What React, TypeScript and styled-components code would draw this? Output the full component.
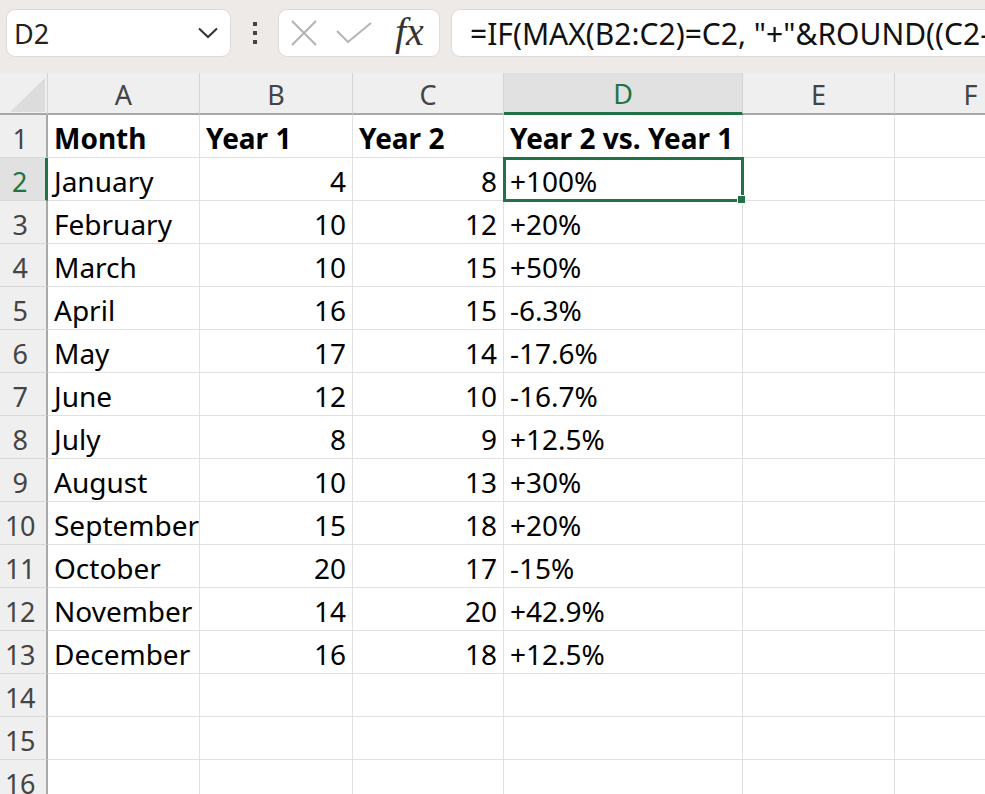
import styled, { createGlobalStyle } from "styled-components";

const GlobalStyle = createGlobalStyle`
  html, body {
    margin: 0;
    padding: 0;
    background: #fff;
    overflow: hidden;
  }
  body {
    font-family: "Noto Sans", "Open Sans", sans-serif;
  }
`;

const GREEN = "#217346";
const GRID = "#e1e1e1";
const HEAD_BG = "#efefef";
const HEAD_SEL = "#e1e1e1";

const Page = styled.div`
  width: 985px;
  height: 794px;
  overflow: hidden;
`;

const Toolbar = styled.div`
  height: 73px;
  background: #eeeae8;
  display: flex;
  align-items: flex-start;
  padding: 9px 0 0 6px;
  box-sizing: border-box;
  white-space: nowrap;
`;

const Box = styled.div<{ $w?: number }>`
  height: 48px;
  box-sizing: border-box;
  background: #fff;
  border: 1px solid #dedad8;
  border-radius: 9px;
  display: flex;
  align-items: center;
  flex: none;
  width: ${(p) => (p.$w ? `${p.$w}px` : "auto")};
  overflow: hidden;
`;

const NameText = styled.span`
  flex: 1;
  padding-left: 7px;
  font-size: 27px;
  color: #222;
`;

const Chevron = styled.svg`
  margin-right: 12px;
`;

const Dots = styled.div`
  width: 47px;
  height: 48px;
  display: flex;
  flex-direction: column;
  align-items: center;
  justify-content: center;
  gap: 5px;
  flex: none;
`;

const Dot = styled.span`
  width: 4px;
  height: 4px;
  background: #444;
`;

const IconSlot = styled.div`
  width: 50px;
  display: flex;
  align-items: center;
  justify-content: center;
`;

const Fx = styled.span`
  font-family: "Liberation Serif", "DejaVu Serif", serif;
  font-style: italic;
  font-size: 40px;
  color: #333;
  margin-left: 16px;
  margin-top: -4px;
`;

const Formula = styled.div`
  margin-left: 11px;
  flex: none;
  width: 600px;
  padding-left: 18px;
  font-size: 30px;
  color: #111;
  border-right: none;
  border-top-right-radius: 0;
  border-bottom-right-radius: 0;
`;

const Sheet = styled.div`
  display: grid;
  grid-template-columns: 48px 152px 153px 151px 239px 152px 152px;
  grid-auto-rows: 43px;
  grid-template-rows: 42px;
  font-size: 28px;
`;

const Corner = styled.div`
  background: ${HEAD_BG};
  border-bottom: 2px solid #a8a8a8;
  border-right: 1px solid #d4d4d4;
  position: relative;
  box-sizing: border-box;
  &::after {
    content: "";
    position: absolute;
    left: 10px;
    top: 5px;
    width: 35px;
    height: 34px;
    background: #dcdcdc;
    clip-path: polygon(100% 0, 100% 100%, 0 100%);
  }
`;

const ColHead = styled.div<{ $sel?: boolean }>`
  background: ${(p) => (p.$sel ? HEAD_SEL : HEAD_BG)};
  color: ${(p) => (p.$sel ? GREEN : "#444")};
  border-right: 1px solid #d4d4d4;
  border-bottom: ${(p) => (p.$sel ? `3px solid ${GREEN}` : "2px solid #a8a8a8")};
  box-sizing: border-box;
  display: flex;
  align-items: center;
  justify-content: center;
  padding-top: 2px;
  font-size: 27px;
`;

const RowHead = styled.div<{ $sel?: boolean }>`
  background: ${(p) => (p.$sel ? HEAD_SEL : HEAD_BG)};
  color: ${(p) => (p.$sel ? GREEN : "#444")};
  border-right: ${(p) => (p.$sel ? `3px solid ${GREEN}` : "2px solid #a8a8a8")};
  border-bottom: 1px solid #d8d8d8;
  box-sizing: border-box;
  display: flex;
  align-items: center;
  justify-content: center;
  padding: 4px 6px 0 0;
  letter-spacing: -0.5px;
  font-size: 27px;
`;

const Cell = styled.div<{ $right?: boolean; $bold?: boolean; $sel?: boolean }>`
  border-right: 1px solid ${GRID};
  border-bottom: 1px solid ${GRID};
  box-sizing: border-box;
  padding: 4px 6px 0 6px;
  line-height: 38px;
  text-align: ${(p) => (p.$right ? "right" : "left")};
  font-weight: ${(p) => (p.$bold ? 700 : 400)};
  color: #000;
  white-space: nowrap;
  position: relative;
  ${(p) =>
    p.$sel &&
    `
    outline: 3px solid ${GREEN};
    outline-offset: -2px;
    z-index: 1;
    &::after {
      content: "";
      position: absolute;
      right: -4px;
      bottom: -4px;
      width: 7px;
      height: 7px;
      background: ${GREEN};
      border: 1px solid #fff;
    }
  `}
`;

const columns = ["A", "B", "C", "D", "E", "F"];

const rows: [string, number, number, string][] = [
  ["January", 4, 8, "+100%"],
  ["February", 10, 12, "+20%"],
  ["March", 10, 15, "+50%"],
  ["April", 16, 15, "-6.3%"],
  ["May", 17, 14, "-17.6%"],
  ["June", 12, 10, "-16.7%"],
  ["July", 8, 9, "+12.5%"],
  ["August", 10, 13, "+30%"],
  ["September", 15, 18, "+20%"],
  ["October", 20, 17, "-15%"],
  ["November", 14, 20, "+42.9%"],
  ["December", 16, 18, "+12.5%"],
];

export default function App() {
  return (
    <Page>
      <GlobalStyle />
      <Toolbar>
        <Box $w={225}>
          <NameText>D2</NameText>
          <Chevron width="20" height="12" viewBox="0 0 20 12">
            <path d="M1 1.5 L10 10 L19 1.5" fill="none" stroke="#333" strokeWidth="2" />
          </Chevron>
        </Box>
        <Dots>
          <Dot />
          <Dot />
          <Dot />
        </Dots>
        <Box $w={162}>
          <IconSlot>
            <svg width="26" height="26" viewBox="0 0 26 26">
              <path d="M1 1 L25 25 M25 1 L1 25" stroke="#b4b4b4" strokeWidth="2" fill="none" />
            </svg>
          </IconSlot>
          <IconSlot>
            <svg width="36" height="22" viewBox="0 0 36 22">
              <path d="M1 9 L12 20 L35 1" stroke="#b4b4b4" strokeWidth="2" fill="none" />
            </svg>
          </IconSlot>
          <Fx>fx</Fx>
        </Box>
        <Formula as={Box}>=IF(MAX(B2:C2)=C2, "+"&amp;ROUND((C2-B2)/B2*100, 1)&amp;"%", ROUND((C2-B2)/B2*100, 1)&amp;"%")</Formula>
      </Toolbar>
      <Sheet>
        <Corner />
        {columns.map((c) => (
          <ColHead key={c} $sel={c === "D"}>
            {c}
          </ColHead>
        ))}
        <RowHead>1</RowHead>
        <Cell $bold>Month</Cell>
        <Cell $bold>Year 1</Cell>
        <Cell $bold>Year 2</Cell>
        <Cell $bold>Year 2 vs. Year 1</Cell>
        <Cell />
        <Cell />
        {rows.map((r, i) => (
          <Row key={r[0]} n={i + 2} data={r} />
        ))}
        {[14, 15, 16].map((n) => (
          <Row key={n} n={n} />
        ))}
      </Sheet>
    </Page>
  );
}

function Row({ n, data }: { n: number; data?: [string, number, number, string] }) {
  const sel = n === 2;
  return (
    <>
      <RowHead $sel={sel}>{n}</RowHead>
      <Cell>{data?.[0]}</Cell>
      <Cell $right>{data?.[1]}</Cell>
      <Cell $right>{data?.[2]}</Cell>
      <Cell $sel={sel}>{data?.[3]}</Cell>
      <Cell />
      <Cell />
    </>
  );
}
